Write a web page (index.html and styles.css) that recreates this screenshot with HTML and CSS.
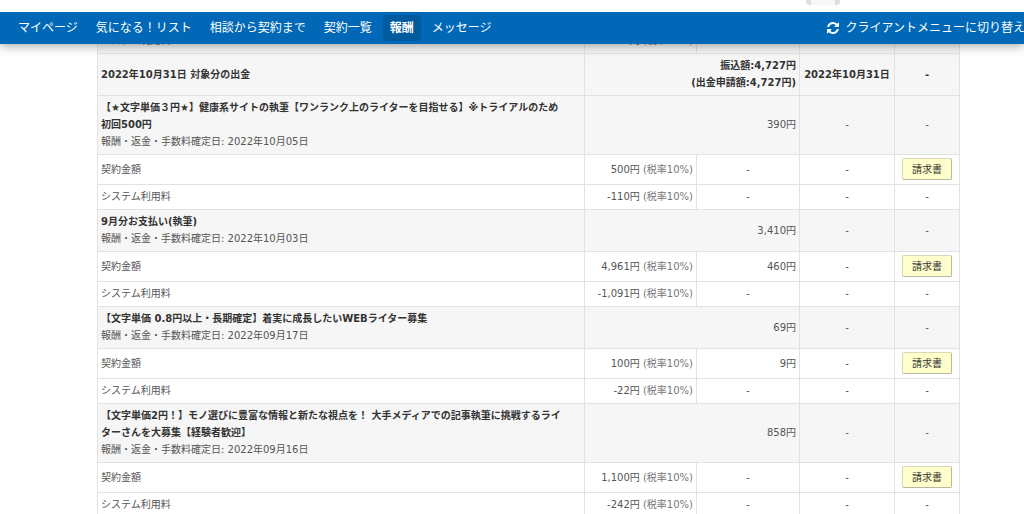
FILE: index.html
```html
<!DOCTYPE html>
<html lang="ja">
<head>
<meta charset="utf-8">
<title>報酬</title>
<meta name="viewport" content="width=device-width, initial-scale=1">
<link rel="stylesheet" href="styles.css">
</head>
<body>
<div class="topstrip"><div class="topstrip-tab"></div></div>
<header class="header">
  <nav class="nav">
    <a class="nav-link" href="#">マイページ</a>
    <a class="nav-link" href="#">気になる！リスト</a>
    <a class="nav-link" href="#">相談から契約まで</a>
    <a class="nav-link" href="#">契約一覧</a>
    <a class="nav-link nav-link-active" href="#" aria-current="page">報酬</a>
    <a class="nav-link" href="#">メッセージ</a>
  </nav>
  <a class="switch" href="#">
    <svg class="switch-icon" viewBox="0 0 1536 1536" aria-hidden="true"><path fill="currentColor" d="M1511 928q0 5-1 7-64 268-268 434.500T764 1536q-146 0-282.500-55T238 1324l-129 129q-19 19-45 19t-45-19-19-45V960q0-26 19-45t45-19h448q26 0 45 19t19 45-19 45l-137 137q71 66 161 102t187 36q134 0 250-65t186-179q11-17 53-117 8-23 30-23h192q13 0 22.500 9.500t9.500 22.500zm25-800v448q0 26-19 45t-45 19h-448q-26 0-45-19t-19-45 19-45l138-138Q969 256 768 256q-134 0-250 65T332 500q-11 17-53 117-8 23-30 23H50q-13 0-22.500-9.500T18 608v-7q65-268 270-434.500T768 0q146 0 284 55.500T1297 212l130-129q19-19 45-19t45 19 19 45z"/></svg>
    <span>クライアントメニューに切り替え</span>
  </a>
</header>
<main class="main">
  <table class="rewards">
    <colgroup>
      <col><col class="col-amount"><col class="col-tax"><col class="col-date"><col class="col-action">
    </colgroup>
    <tbody>
      <tr class="group"><td>システム利用料</td><td class="num">-110円 <small>(税率10%)</small></td><td class="mid">-</td><td class="mid">-</td><td class="mid">-</td></tr>
      <tr class="group payout"><th scope="row">2022年10月31日 対象分の出金</th><td class="num" colspan="2">振込額:4,727円<br>(出金申請額:4,727円)</td><td class="mid">2022年10月31日</td><td class="mid">-</td></tr>

      <tr class="group"><td><strong>【★文字単価３円★】健康系サイトの執筆【ワンランク上のライターを目指せる】※トライアルのため<br>初回500円</strong><br>報酬・返金・手数料確定日: 2022年10月05日</td><td class="num" colspan="2">390円</td><td class="mid">-</td><td class="mid">-</td></tr>
      <tr><td>契約金額</td><td class="num">500円 <small>(税率10%)</small></td><td class="mid">-</td><td class="mid">-</td><td class="mid"><button class="invoice" type="button">請求書</button></td></tr>
      <tr><td>システム利用料</td><td class="num">-110円 <small>(税率10%)</small></td><td class="mid">-</td><td class="mid">-</td><td class="mid">-</td></tr>

      <tr class="group"><td><strong>9月分お支払い(執筆)</strong><br>報酬・返金・手数料確定日: 2022年10月03日</td><td class="num" colspan="2">3,410円</td><td class="mid">-</td><td class="mid">-</td></tr>
      <tr><td>契約金額</td><td class="num">4,961円 <small>(税率10%)</small></td><td class="num">460円</td><td class="mid">-</td><td class="mid"><button class="invoice" type="button">請求書</button></td></tr>
      <tr><td>システム利用料</td><td class="num">-1,091円 <small>(税率10%)</small></td><td class="mid">-</td><td class="mid">-</td><td class="mid">-</td></tr>

      <tr class="group"><td><strong>【文字単価 0.8円以上・長期確定】着実に成長したいWEBライター募集</strong><br>報酬・返金・手数料確定日: 2022年09月17日</td><td class="num" colspan="2">69円</td><td class="mid">-</td><td class="mid">-</td></tr>
      <tr><td>契約金額</td><td class="num">100円 <small>(税率10%)</small></td><td class="num">9円</td><td class="mid">-</td><td class="mid"><button class="invoice" type="button">請求書</button></td></tr>
      <tr><td>システム利用料</td><td class="num">-22円 <small>(税率10%)</small></td><td class="mid">-</td><td class="mid">-</td><td class="mid">-</td></tr>

      <tr class="group"><td><strong>【文字単価2円！】モノ選びに豊富な情報と新たな視点を！ 大手メディアでの記事執筆に挑戦するライ<br>ターさんを大募集【経験者歓迎】</strong><br>報酬・返金・手数料確定日: 2022年09月16日</td><td class="num" colspan="2">858円</td><td class="mid">-</td><td class="mid">-</td></tr>
      <tr><td>契約金額</td><td class="num">1,100円 <small>(税率10%)</small></td><td class="mid">-</td><td class="mid">-</td><td class="mid"><button class="invoice" type="button">請求書</button></td></tr>
      <tr><td>システム利用料</td><td class="num">-242円 <small>(税率10%)</small></td><td class="mid">-</td><td class="mid">-</td><td class="mid">-</td></tr>
    </tbody>
  </table>
</main>
</body>
</html>
```
FILE: styles.css
```css
* { box-sizing: border-box; }

body {
  margin: 0;
  background: #fff;
  color: #555;
  font: 10px/17px "DejaVu Sans", "Noto Sans CJK JP", sans-serif;
  overflow: hidden;
}

.topstrip {
  display: flex;
  justify-content: flex-end;
  height: 12px;
  padding-right: 184px;
}

.topstrip-tab {
  width: 34px;
  height: 5px;
  border: solid #ddd;
  border-width: 0 5px;
  border-radius: 0 0 4px 4px;
  background: #f7f7f7;
}

.header {
  position: relative;
  z-index: 1;
  display: flex;
  align-items: center;
  justify-content: space-between;
  height: 32px;
  padding-left: 11px;
  background: #0068b7;
  box-shadow: 0 1px 12px rgba(0, 0, 0, 0.4);
  clip-path: inset(0 0 -20px 0);
  font-size: 12px;
  white-space: nowrap;
}

.nav {
  display: flex;
  gap: 4px;
}

.nav-link {
  padding: 0 7px;
  border-radius: 4px;
  color: #fff;
  line-height: 26px;
  text-decoration: none;
}

.nav-link-active {
  background: #005a9e;
  font-weight: bold;
}

.switch {
  display: flex;
  align-items: center;
  gap: 6px;
  margin-right: -1px;
  color: #fff;
  text-decoration: none;
}

.switch-icon {
  width: 12px;
  height: 12px;
}

.main {
  margin: -16px 64px 0 97px;
}

.rewards {
  width: 100%;
  table-layout: fixed;
  border-collapse: collapse;
}

.col-amount { width: 112px; }
.col-tax { width: 103px; }
.col-date { width: 95px; }
.col-action { width: 65px; }

.rewards th,
.rewards td {
  padding: 3px 3px 4px;
  border: 1px solid #e2e2e2;
  text-align: left;
  vertical-align: middle;
}

.rewards small {
  color: #777;
  font-size: 10px;
}

.rewards .group { background: #f6f6f6; }

.group strong,
.payout td,
.payout th {
  color: #333;
  font-weight: bold;
}

.rewards .num { text-align: right; }

.rewards .mid {
  padding-right: 0;
  padding-left: 0;
  text-align: center;
}

.invoice {
  display: block;
  width: 50px;
  height: 22px;
  margin: 0 auto;
  padding: 0;
  border: 1px solid #d8d8b8;
  border-right-color: #b8b8a0;
  border-bottom-color: #b8b8a0;
  border-radius: 2px;
  background: #ffffcc;
  color: #333;
  font: inherit;
}
```
